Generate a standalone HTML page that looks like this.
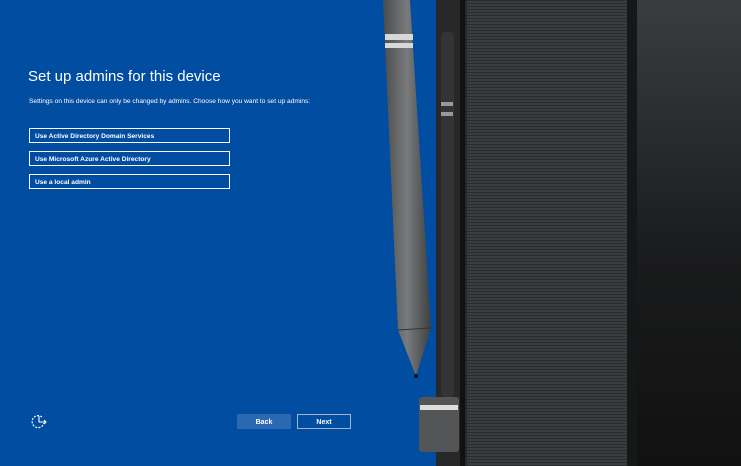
<!DOCTYPE html>
<html><head><style>
body{margin:0;width:741px;height:466px;overflow:hidden;background:#004da1;font-family:"Liberation Sans",sans-serif;position:relative}
.a{position:absolute}
h1{position:absolute;left:28px;top:68px;margin:0;font-weight:normal;font-size:15px;color:#fff}
.p{left:29px;top:98px;font-size:6.6px;color:#fff}
.b{position:absolute;left:29px;width:201px;border:1px solid #fff;color:#fff;font-size:6.6px;font-weight:bold;padding-left:5px;padding-top:1px;box-sizing:border-box;height:15px;display:flex;align-items:center}
.btn{position:absolute;top:414px;width:54px;height:15px;color:#fff;font-size:7px;font-weight:bold;box-sizing:border-box;display:flex;align-items:center;justify-content:center;padding-top:1px}
</style></head><body>
<h1>Set up admins for this device</h1>
<div class="a p">Settings on this device can only be changed by admins. Choose how you want to set up admins:</div>
<div class="b" style="top:128px">Use Active Directory Domain Services</div>
<div class="b" style="top:151px">Use Microsoft Azure Active Directory</div>
<div class="b" style="top:174px">Use a local admin</div>
<div class="btn" style="left:237px;background:#2a68b4">Back</div>
<div class="btn" style="left:297px;border:1px solid #a0b4cc">Next</div>
<svg class="a" style="left:31px;top:413px" width="18" height="16" viewBox="0 0 18 16"><path d="M11 4A6 6 0 1 0 13 10" fill="none" stroke="#fff" stroke-width="1.2" stroke-dasharray="2 1.3"/><path d="M8 3V9H15M13 7l2 2-2 2" fill="none" stroke="#fff" stroke-width="1.1"/></svg>
<div class="a" style="left:436px;top:0;width:32px;height:466px;background:#272829"></div>
<div class="a" style="left:441px;top:32px;width:13px;height:365px;background:#323436;border-radius:4px"></div>
<div class="a" style="left:441px;top:102px;width:12px;height:4px;background:#999"></div>
<div class="a" style="left:441px;top:112px;width:12px;height:4px;background:#999"></div>
<div class="a" style="left:460px;top:0;width:5px;height:466px;background:#111"></div>
<div class="a" style="left:467px;top:0;width:160px;height:466px;background:repeating-linear-gradient(0deg,#2a2b2d 0 1px,#3b3c3e 1px 3px),#333"></div>
<div class="a" style="left:627px;top:0;width:10px;height:466px;background:#161718"></div>
<div class="a" style="left:637px;top:0;width:104px;height:466px;background:linear-gradient(#3a3c3e,#1a1b1c 55%,#111)"></div>
<svg class="a" style="left:380px;top:0" width="90" height="466"><defs><linearGradient id="g" x1="0" x2="1"><stop offset="0" stop-color="#4a4b4d"/><stop offset=".5" stop-color="#7a7b7d"/><stop offset="1" stop-color="#3e3f41"/></linearGradient></defs>
<path d="M3 0H30L51 328L36 376L18 330Z" fill="url(#g)"/>
<path d="M5 34H33V40H5ZM5 43H33V48H5Z" fill="#d8d8d8"/>
<path d="M18 330L51 328" stroke="#333" stroke-width="1"/>
<circle cx="36" cy="376" r="2" fill="#111"/>
<rect x="39" y="397" width="40" height="55" rx="3" fill="#545557"/>
<rect x="40" y="405" width="38" height="5" fill="#ddd"/>
</svg>
</body></html>
